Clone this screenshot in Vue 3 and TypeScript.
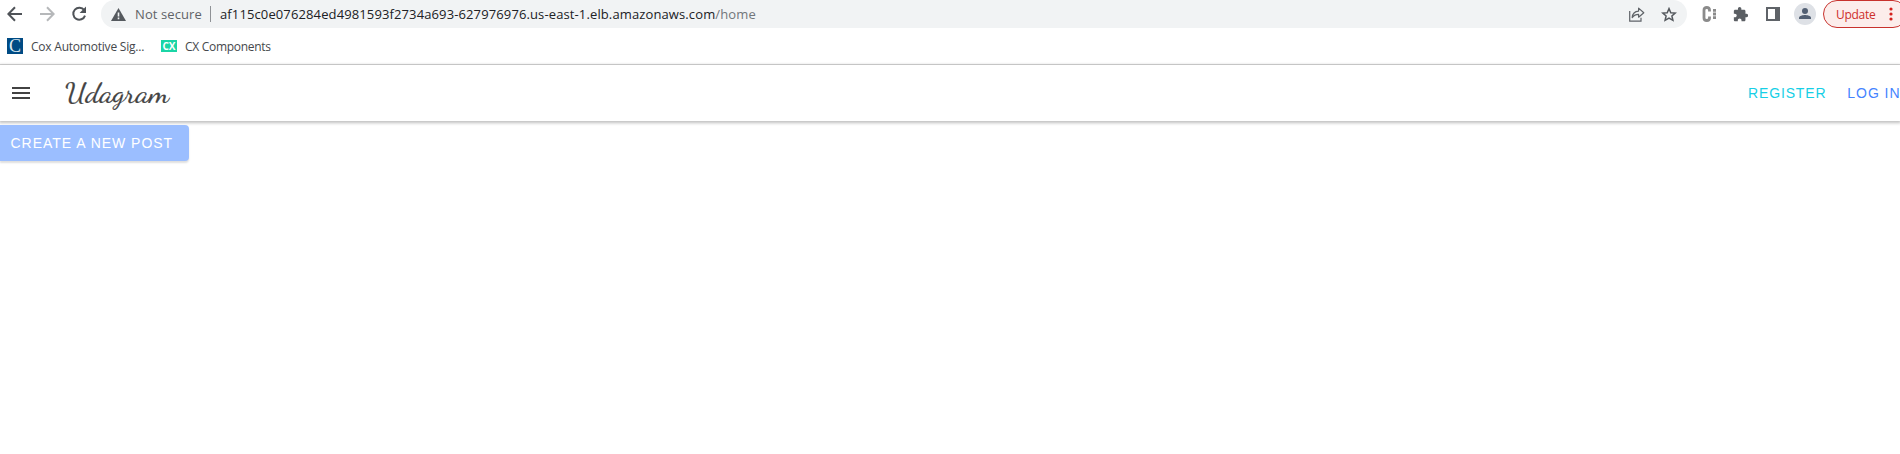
<script setup lang="ts">
interface Bookmark {
  label: string
  kind: 'cox' | 'cx'
}

const bookmarks: Bookmark[] = [
  { label: 'Cox Automotive Sig...', kind: 'cox' },
  { label: 'CX Components', kind: 'cx' },
]
const host = 'af115c0e076284ed4981593f2734a693-627976976.us-east-1.elb.amazonaws.com'
const path = '/home'
</script>

<template>
  <div class="window">
    <div class="toolbar">
      <svg class="back" width="16" height="16" viewBox="0 0 16 16" fill="none" stroke="#4f5358" stroke-width="2">
        <path d="M15 8H2M8 1.3L1.4 8L8 14.7" />
      </svg>
      <svg class="forward" width="16" height="16" viewBox="0 0 16 16" fill="none" stroke="#b6b8ba" stroke-width="2">
        <path d="M1 8H14M8 1.3L14.6 8L8 14.7" />
      </svg>
      <svg class="reload" width="16" height="16" viewBox="0 0 16 16">
        <path d="M13.2 4.2A6 6 0 1 0 14 9.6" fill="none" stroke="#4f5358" stroke-width="2" />
        <path d="M15 0.6V7H8.6Z" fill="#4f5358" />
      </svg>
      <div class="omnibox">
        <svg class="warn" width="15" height="13" viewBox="0 0 15 13">
          <path d="M7.5 0L15 13H0Z" fill="#55595e" />
          <path d="M6.7 4.6h1.6v3.8H6.7zM6.7 9.6h1.6v1.6H6.7z" fill="#f1f3f4" />
        </svg>
        <span class="insecure">Not secure</span>
        <i class="divider"></i>
        <span class="url">{{ host }}<em>{{ path }}</em></span>
        <svg class="share" width="16" height="15" viewBox="0 0 16 15" fill="none" stroke="#5f6368" stroke-width="1.2">
          <path d="M.7 4V14.2H12V10.8" />
          <path d="M3.2 10.6C3.5 6.7 6 4.3 9.6 4.1V1.1L14.8 5.7L9.6 10.2V7.4C6.8 7.4 4.8 8.4 3.2 10.6Z" stroke-linejoin="round" />
        </svg>
        <svg class="star" width="16" height="15" viewBox="0 0 16 15">
          <path d="M8 1.6L9.8 5.7L14.2 6.1L10.9 9L11.9 13.3L8 11L4.1 13.3L5.1 9L1.8 6.1L6.2 5.7Z" fill="none" stroke="#55595e" stroke-width="1.5" />
        </svg>
      </div>
      <svg class="ext" width="15" height="16" viewBox="0 0 15 16">
        <path d="M7.5 5.4V4Q7.5 1.5 4.800 1.5Q2 1.5 2 4V12Q2 14.5 4.800 14.5Q7.5 14.5 7.5 12V10.6" fill="none" stroke="#8b8b8b" stroke-width="2.8" />
        <path d="M11 3h3v2.8h-3zM11 6.6h3v2.8h-3zM11 10.2h3V13h-3z" fill="#8b8b8b" />
      </svg>
      <svg class="puzzle" width="15" height="15" viewBox="1 1 21.5 22">
        <path d="M20.5 11H19V7c0-1.1-.9-2-2-2h-4V3.5C13 2.1 11.9 1 10.5 1S8 2.1 8 3.5V5H4c-1.1 0-2 .9-2 2v3.8h1.5c1.5 0 2.7 1.2 2.7 2.7S5 16.2 3.5 16.2H2V20c0 1.1.9 2 2 2h3.8v-1.5c0-1.5 1.2-2.7 2.7-2.7s2.7 1.2 2.7 2.7V22H17c1.1 0 2-.9 2-2v-4h1.5c1.4 0 2.5-1.1 2.5-2.5S21.9 11 20.5 11z" fill="#5b5f64" />
      </svg>
      <svg class="panel" width="14" height="14" viewBox="0 0 14 14">
        <path d="M0 0H14V14H0ZM2 2V12H9V2Z" fill="#5f6368" fill-rule="evenodd" />
      </svg>
      <svg class="avatar" width="22" height="22" viewBox="0 0 22 22">
        <circle cx="11" cy="11" r="11" fill="#dee1e6" />
        <circle cx="11" cy="8" r="3" fill="#525f73" />
        <path d="M5 16V14.8C5 12.8 9 12 11 12S17 12.8 17 14.8V16Z" fill="#525f73" />
      </svg>
      <div class="update">
        <span>Update</span>
        <svg width="4" height="14" viewBox="0 0 4 14" fill="#d4211d">
          <circle cx="2" cy="2" r="1.6" /><circle cx="2" cy="7" r="1.6" /><circle cx="2" cy="12" r="1.6" />
        </svg>
      </div>
    </div>

    <div class="bookmarks">
      <div v-for="b in bookmarks" :key="b.label" class="bookmark" :class="b.kind">
        <span v-if="b.kind === 'cox'" class="icon">C</span>
        <span v-else class="icon">CX</span>
        <span class="label">{{ b.label }}</span>
      </div>
    </div>

    <header class="header">
      <svg class="menu" width="18" height="12" viewBox="0 0 18 12" fill="#424242">
        <path d="M0 0H18V2H0ZM0 5H18V7H0ZM0 10H18V12H0Z" />
      </svg>
      <svg class="logo" width="108" height="36" viewBox="0 0 108 36">
        <text x="0" y="27" textLength="104" lengthAdjust="spacingAndGlyphs">Udagram</text>
      </svg>
      <nav>
        <a class="register">REGISTER</a>
        <a class="login">LOG IN</a>
      </nav>
    </header>

    <main>
      <button class="create" disabled>CREATE A NEW POST</button>
    </main>
  </div>
</template>

<style>
body {
  margin: 0;
  background: #fff;
  overflow: hidden;
}
</style>

<style scoped>
.window {
  width: 1900px;
  height: 454px;
  overflow: hidden;
  background: #fff;
  font-family: "Open Sans", "Noto Sans", sans-serif;
}
svg { flex: none; display: block; }
.toolbar {
  display: flex;
  align-items: center;
  height: 28px;
  white-space: nowrap;
}
.back { margin-left: 7px; }
.forward { margin-left: 16px; }
.reload { margin-left: 16px; }
.omnibox {
  display: flex;
  align-items: center;
  box-sizing: border-box;
  width: 1586px;
  height: 28px;
  margin-left: 14px;
  padding-left: 10px;
  border-radius: 14px;
  background: #f1f3f4;
  font-size: 13px;
  flex: none;
}
.insecure {
  width: 67px;
  margin-left: 9px;
  color: #5f6368;
  letter-spacing: 0.1px;
}
.divider {
  width: 1px;
  height: 16px;
  margin-left: 8px;
  background: #8f9296;
}
.url {
  width: 540px;
  margin-left: 9px;
  color: #202124;
  letter-spacing: 0.12px;
}
.url em { font-style: normal; color: #72767a; }
.share { margin-left: auto; }
.star { margin: 0 10px 0 16px; }
.ext { margin-left: 15px; }
.puzzle { margin-left: 16px; }
.panel { margin-left: 18px; }
.avatar { margin-left: 14px; }
.update {
  display: flex;
  align-items: center;
  box-sizing: border-box;
  width: 84px;
  height: 28px;
  margin-left: 7px;
  padding-left: 12px;
  border: 1px solid #c8322d;
  border-radius: 14px;
  background: #fcedeb;
  color: #ce2f2a;
  font-size: 12px;
  letter-spacing: -0.3px;
  flex: none;
}
.update span { width: 39px; }
.update svg { margin-left: 14px; }
.bookmarks {
  display: flex;
  align-items: center;
  height: 36px;
  border-bottom: 1px solid #dadada;
}
.bookmark {
  display: flex;
  align-items: center;
  font-size: 12px;
  color: #45484c;
  white-space: nowrap;
}
.icon {
  display: flex;
  align-items: center;
  justify-content: center;
  color: #fff;
}
.cox { margin-left: 7px; }
.cox .icon {
  width: 16px;
  height: 16px;
  background: #004b84;
  color: #dce8f0;
  font: 18px/16px "Liberation Serif", serif;
}
.cox .label { width: 114px; margin-left: 8px; letter-spacing: -0.22px; }
.cx { margin-left: 16px; }
.cx .icon {
  width: 16px;
  height: 12px;
  background: #1bd5a6;
  font: bold 10px/12px "Open Sans", sans-serif;
}
.cx .label { margin-left: 8px; letter-spacing: -0.3px; }
.header {
  display: flex;
  align-items: center;
  height: 56px;
  box-shadow: 0 1px 3px 1px rgba(0, 0, 0, 0.25);
}
.menu { margin-left: 12px; }
.logo { margin-left: 35px; overflow: visible; }
.logo text {
  fill: #444;
  stroke: #444;
  stroke-width: 0.2px;
  font: 29px "Dancing Script", "Liberation Serif", cursive;
}
nav {
  display: flex;
  margin-left: auto;
  font: 14px/16px "Liberation Sans", Arial, sans-serif;
  letter-spacing: 0.84px;
  white-space: nowrap;
}
.register { color: #16cfe6; margin-right: 21px; }
.login { color: #4584ff; margin-right: -0.5px; letter-spacing: 0.95px; }
main { padding-top: 4px; }
.create {
  display: block;
  width: 189px;
  height: 36px;
  padding: 0 0 0 10.5px;
  border: 0;
  border-radius: 0 4px 4px 0;
  background: #9bbeff;
  box-shadow: 0 2px 2px rgba(0, 0, 0, 0.13);
  color: #fff;
  font: 14px/36px "Liberation Sans", Arial, sans-serif;
  letter-spacing: 0.98px;
  text-align: left;
}
</style>
